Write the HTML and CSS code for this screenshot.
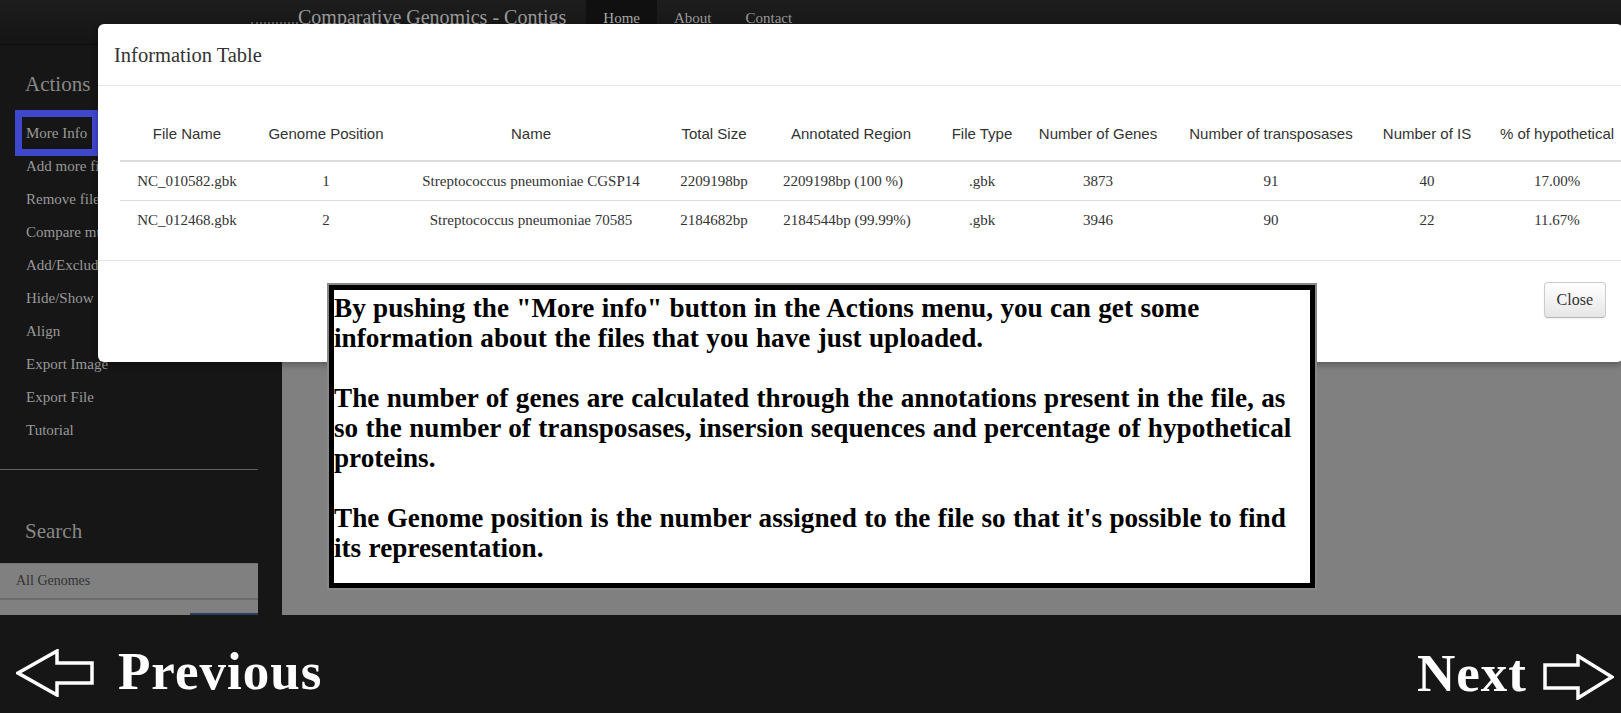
FILE: index.html
```html
<!DOCTYPE html>
<html lang="en">
<head>
<meta charset="utf-8">
<title>Comparative Genomics - Contigs</title>
<link rel="stylesheet" href="styles.css">
</head>
<body>
<header class="navbar">
  <span class="brand-dots"></span>
  <a class="brand">Comparative Genomics - Contigs</a>
  <ul class="nav">
    <li class="active"><a>Home</a></li>
    <li><a>About</a></li>
    <li><a>Contact</a></li>
  </ul>
</header>

<div class="layout">
  <aside class="sidebar">
    <h3 class="side-title">Actions</h3>
    <ul class="side-menu">
      <li><a class="highlight">More Info</a></li>
      <li><a>Add more files</a></li>
      <li><a>Remove files</a></li>
      <li><a>Compare multiple</a></li>
      <li><a>Add/Exclude</a></li>
      <li><a>Hide/Show labels</a></li>
      <li><a>Align</a></li>
      <li><a>Export Image</a></li>
      <li><a>Export File</a></li>
      <li><a>Tutorial</a></li>
    </ul>
    <hr class="side-rule">
    <h3 class="side-title search-title">Search</h3>
    <div class="genome-select">All Genomes</div>
    <div class="genome-extra"><span class="genome-scroll"></span></div>
  </aside>
  <main class="content"></main>
</div>

<footer class="tour-nav">
  <a class="tour-link prev">
    <svg class="arrow arrow-left" width="78" height="48" viewBox="-2 -2 78 48" aria-hidden="true">
      <polygon points="0,22 39,0 39,12 74,12 74,32 39,32 39,44" fill="none" stroke="#fff" stroke-width="3.5"/>
    </svg>
    <span>Previous</span>
  </a>
  <a class="tour-link next">
    <span>Next</span>
    <svg class="arrow arrow-right" width="71" height="46" viewBox="-2 -2 71 46" aria-hidden="true">
      <polygon points="0,9 33,9 33,0 67,21 33,42 33,32 0,32" fill="none" stroke="#fff" stroke-width="3.5"/>
    </svg>
  </a>
</footer>

<div class="modal">
  <div class="modal-header">
    <h3 class="modal-title">Information Table</h3>
  </div>
  <div class="modal-body">
    <table class="info-table">
      <colgroup>
        <col class="c-file"><col class="c-pos"><col class="c-name"><col class="c-size"><col class="c-annot">
        <col class="c-type"><col class="c-genes"><col class="c-trans"><col class="c-is"><col class="c-hyp">
      </colgroup>
      <thead>
        <tr>
          <th>File Name</th><th>Genome Position</th><th>Name</th><th>Total Size</th><th>Annotated Region</th>
          <th>File Type</th><th>Number of Genes</th><th>Number of transposases</th><th>Number of IS</th><th>% of hypothetical</th>
        </tr>
      </thead>
      <tbody>
        <tr>
          <td>NC_010582.gbk</td><td>1</td><td>Streptococcus pneumoniae CGSP14</td><td>2209198bp</td><td class="annot annot-first">2209198bp (100 %)</td>
          <td>.gbk</td><td>3873</td><td>91</td><td>40</td><td>17.00%</td>
        </tr>
        <tr>
          <td>NC_012468.gbk</td><td>2</td><td>Streptococcus pneumoniae 70585</td><td>2184682bp</td><td class="annot">2184544bp (99.99%)</td>
          <td>.gbk</td><td>3946</td><td>90</td><td>22</td><td>11.67%</td>
        </tr>
      </tbody>
    </table>
  </div>
  <div class="modal-footer">
    <button class="btn">Close</button>
  </div>
</div>

<div class="tour-tip">
  <p>By pushing the "More info" button in the Actions menu, you can get some information about the files that you have just uploaded.</p>
  <p>The number of genes are calculated through the annotations present in the file, as so the number of transposases, insersion sequences and percentage of hypothetical proteins.</p>
  <p>The Genome position is the number assigned to the file so that it's possible to find its representation.</p>
</div>
</body>
</html>
```

FILE: styles.css
```css
* { box-sizing: border-box; }

html, body {
  margin: 0;
  padding: 0;
  overflow: hidden;
}

body {
  width: 1621px;
  height: 713px;
  position: relative;
  background: #161616;
  font-family: "Liberation Serif", "Times New Roman", serif;
}

/* ---------- top navbar ---------- */
.navbar {
  height: 45px;
  display: flex;
  align-items: flex-start;
  padding-left: 251px;
  background: linear-gradient(#1d1d1d, #141414);
  border-bottom: 1px solid #0c0c0c;
}

.brand-dots {
  width: 47px;
  margin-top: 22px;
  border-bottom: 2px dotted #5a5a5a;
}

.brand {
  font-size: 20px;
  line-height: 24px;
  padding-top: 5px;
  color: #999;
  white-space: nowrap;
}

.nav {
  display: flex;
  list-style: none;
  margin: 0 0 0 20px;
  padding: 0;
}

.nav a {
  display: block;
  height: 44px;
  padding: 8px 17px 0;
  font-size: 15px;
  line-height: 20px;
  color: #999;
}

.nav .active a {
  background: #101010;
  color: #a8a8a8;
}

/* ---------- layout ---------- */
.layout {
  display: flex;
  gap: 24px;
  height: 570px;
}

.sidebar {
  width: 258px;
  flex: none;
  display: flex;
  flex-direction: column;
  background: #161616;
}

.side-title {
  margin: 26px 0 0 25px;
  font-size: 21px;
  line-height: 26px;
  font-weight: normal;
  color: #888;
}

.side-menu {
  list-style: none;
  margin: 20px 0 0;
  padding: 0;
}

.side-menu li {
  height: 33px;
}

.side-menu a {
  display: inline-block;
  margin-left: 22px;
  padding: 0 5px 0 4px;
  font-size: 15px;
  line-height: 32px;
  color: #999;
  white-space: nowrap;
}

.side-menu .highlight {
  outline: 7px solid #3f47cc;
}

.side-rule {
  margin: 22px 0 0;
  height: 0;
  border: 0;
  border-top: 1px solid #5f5f5f;
}

.search-title {
  margin-top: 48px;
}

.genome-select {
  margin-top: 19px;
  height: 37px;
  padding-left: 16px;
  background: #808080;
  border-top: 1px solid #727272;
  border-bottom: 2px solid #6c6c6c;
  font-size: 14px;
  line-height: 34px;
  color: #333;
}

.genome-extra {
  flex: 1;
  display: flex;
  justify-content: flex-end;
  align-items: flex-end;
  background: #808080;
}

.genome-scroll {
  width: 68px;
  height: 2px;
  background: #23405c;
}

.content {
  flex: 1;
  background: #808080;
}

/* ---------- tour navigation ---------- */
.tour-nav {
  height: 98px;
  display: flex;
  justify-content: space-between;
  align-items: center;
  padding: 14px 7px 0 16px;
}

.tour-link {
  display: flex;
  align-items: center;
  color: #fff;
  font-weight: bold;
  font-size: 53px;
  line-height: 60px;
  letter-spacing: 1px;
}

.prev { gap: 24px; }
.next { gap: 16px; margin-top: 4px; }

.arrow-left { margin-top: 4px; }
.arrow-right { margin-top: 8px; }

/* ---------- modal ---------- */
.modal {
  position: absolute;
  left: 98px;
  top: 24px;
  width: 1525px;
  background: #fff;
  border-radius: 6px;
  box-shadow: 0 3px 7px rgba(0, 0, 0, 0.3);
  z-index: 10;
}

.modal-header {
  padding: 17px 18px 16px 16px;
  border-bottom: 1px solid #e5e5e5;
}

.modal-title {
  margin: 0;
  font-size: 20.5px;
  line-height: 28px;
  font-weight: normal;
  color: #333;
}

.modal-body {
  padding: 22px 0 21px 22px;
}

.info-table {
  width: 1512px;
  table-layout: fixed;
  border-collapse: separate;
  border-spacing: 0;
  color: #333;
}

.c-file { width: 134px; }
.c-pos { width: 144px; }
.c-name { width: 266px; }
.c-size { width: 100px; }
.c-annot { width: 174px; }
.c-type { width: 88px; }
.c-genes { width: 144px; }
.c-trans { width: 202px; }
.c-is { width: 110px; }
.c-hyp { width: 150px; }

.info-table th {
  font-family: "Liberation Sans", Arial, sans-serif;
  font-size: 15px;
  font-weight: normal;
  line-height: 20px;
  padding: 16px 2px;
  text-align: center;
  vertical-align: bottom;
  white-space: nowrap;
  border-bottom: 2px solid #ddd;
}

.info-table td {
  font-size: 15px;
  line-height: 20px;
  padding: 9px 2px;
  text-align: center;
  white-space: nowrap;
}

.info-table td.annot {
  padding-right: 10px;
}

.info-table td.annot-first {
  padding-right: 18px;
}

.info-table tbody tr + tr td {
  border-top: 1px solid #ddd;
}

.modal-footer {
  height: 102px;
  padding: 21px 17px 0;
  border-top: 1px solid #e5e5e5;
  text-align: right;
}

.btn {
  height: 36px;
  padding: 0 12px;
  font-family: "Liberation Serif", "Times New Roman", serif;
  font-size: 16px;
  color: #333;
  background: linear-gradient(#ffffff, #e6e6e6);
  border: 1px solid #cccccc;
  border-bottom-color: #b3b3b3;
  border-radius: 4px;
  box-shadow: inset 0 1px 0 rgba(255, 255, 255, 0.2), 0 1px 2px rgba(0, 0, 0, 0.05);
}

/* ---------- tour tooltip ---------- */
.tour-tip {
  position: absolute;
  left: 329px;
  top: 285px;
  width: 986px;
  padding: 3px 0 20px;
  background: #fff;
  border: 5px solid #000;
  box-shadow: 0 0 0 2px #888;
  font-size: 27.2px;
  line-height: 30px;
  word-spacing: 0.6px;
  font-weight: bold;
  color: #000;
  z-index: 20;
}

.tour-tip p {
  margin: 0;
}

.tour-tip p + p {
  margin-top: 30px;
}
```
